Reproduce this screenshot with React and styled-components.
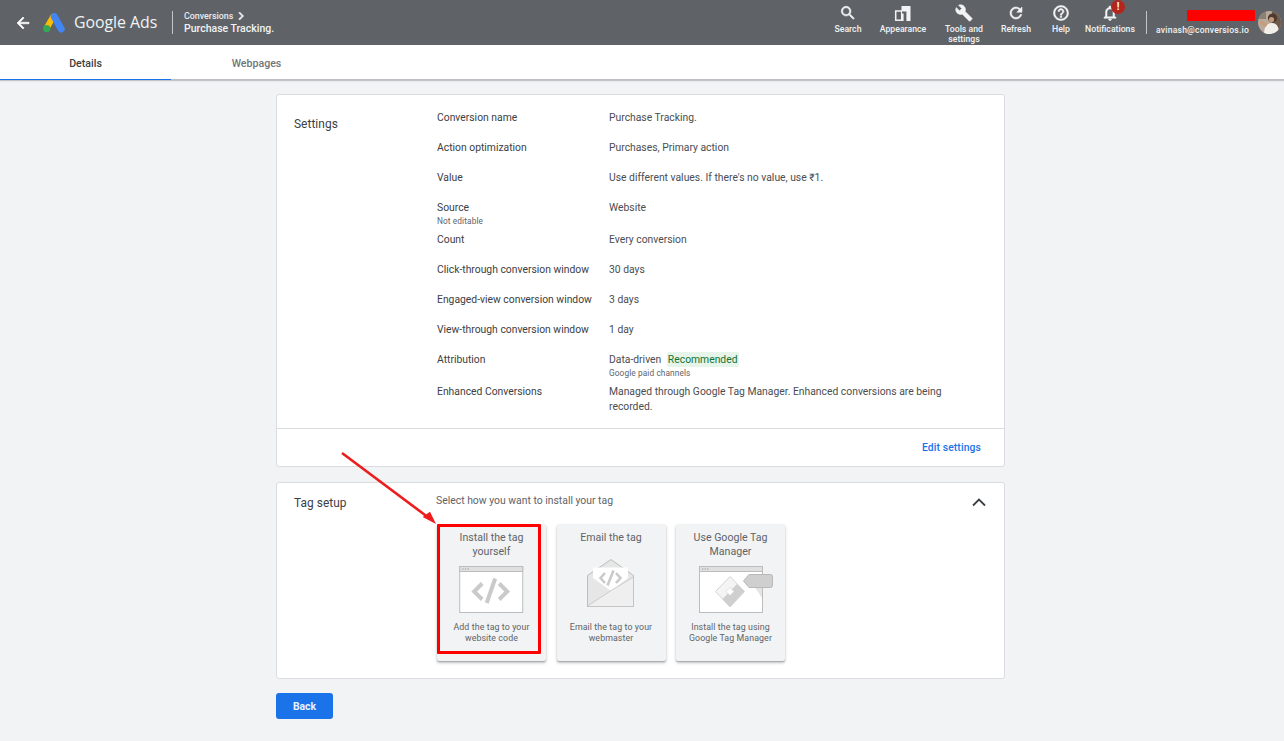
import React from "react";
import styled, { createGlobalStyle } from "styled-components";
import { MdArrowBack, MdBuild, MdChevronRight, MdHelpOutline, MdNotificationsNone, MdRefresh, MdSearch } from "react-icons/md";

const Global = createGlobalStyle`
  html, body { margin: 0; padding: 0; background: #f1f3f4; overflow: hidden; }
  body { font-family: Roboto, "Liberation Sans", sans-serif; color: #3c4043; }
  header svg path[fill="none"] { stroke: none; }
`;

const Page = styled.div`position: relative; width: 1284px; height: 741px; overflow: hidden;`;

const Header = styled.header`
  height: 45px; background: #5f6368; color: #fff; display: flex; align-items: stretch;
`;
const BackIcon = styled.div`
  width: 43px; display: flex; align-items: center; justify-content: center; font-size: 18px;
  svg { display: block; margin-left: 3px; stroke: currentColor; stroke-width: 0.8; }
`;
const Logo = styled.svg`width: 22px; height: 20px; margin-top: 13px;`;
const Brand = styled.div`
  margin-left: 9px; font-family: "Open Sans", Roboto, sans-serif; font-size: 15.9px; line-height: 45px; width: 98px; color: #f1f3f4; letter-spacing: -0.05px;
`;
const VDivider = styled.div`width: 1px; height: 23px; margin-top: 11px; background: #c4c7c9;`;
const Crumbs = styled.div`margin-left: 11px; padding-top: 10px; flex: 1;`;
const CrumbTop = styled.div`display: flex; align-items: center; height: 12px; font-size: 8.9px; font-weight: 500; line-height: 12px; color: #e8eaed;
  svg { flex: none; font-size: 16px; stroke: currentColor; stroke-width: 1; }`;
const CrumbMain = styled.div`font-size: 10.5px; font-weight: 500; line-height: 14px; color: #f1f3f4;`;
const Tools = styled.nav`display: flex; align-items: flex-start; margin-right: 10px;`;
const Tool = styled.div`
  position: relative; width: ${p => p.$w}px; display: flex; flex-direction: column; align-items: center; padding-top: 4px;
  font-size: 8.7px; font-weight: 500; line-height: 10px; text-align: center; color: #f1f3f4;
  svg.icon { display: block; width: 18px; height: 18px; margin-bottom: 2px; stroke: currentColor; stroke-width: 0.7; }
`;
const ToolLabel = styled.span`width: 44px;`;
const Badge = styled.span`
  position: absolute; top: 0; left: 27px; width: 14px; height: 14px; border-radius: 50%; background: #b3261e; color: #fff;
  font-size: 10px; font-weight: 700; line-height: 14px; text-align: center;
`;
const Account = styled.div`
  margin-left: 9px; width: 93px; display: flex; flex-direction: column; align-items: flex-end; padding-top: 10px;
`;
const Redact = styled.div`width: 68px; height: 11px; background: #ff0000; border-radius: 1px; margin-right: -6px;`;
const Email = styled.div`font-size: 8.6px; font-weight: 500; line-height: 12px; margin-top: 3px; color: #f1f3f4; letter-spacing: 0.2px; white-space: nowrap;`;
const Avatar = styled.svg`width: 23px; height: 23px; margin: 11px 3px 0 9px; border-radius: 50%;`;

const TabBar = styled.div`
  height: 34px; background: #fff; display: flex; border-bottom: 1px solid #bdc1c6; box-shadow: 0 1px 1px rgba(60,64,67,.25);
`;
const Tab = styled.div`
  width: 171px; height: 35px; text-align: center; font-size: 10.6px; font-weight: 500; line-height: 37px;
  color: ${p => (p.$active ? "#3c4043" : "#70757a")};
  box-sizing: border-box;
  border-bottom: ${p => (p.$active ? "1px solid #1a73e8" : "none")};
`;

const Main = styled.main`width: 729px; margin: 14px 0 0 276px; display: flex; flex-direction: column; align-items: flex-start;`;
const Card = styled.section`
  position: relative; width: 100%; box-sizing: border-box; background: #fff; border: 1px solid #dadce0; border-radius: 3px;
  margin-bottom: 15px;
`;
const Body = styled.div`display: flex; padding: ${p => p.$pad || 0};`;
const CardTitle = styled.h2`
  margin: 0; width: 143px; padding-left: 17px; font-size: 11.9px; font-weight: 400; line-height: 15px; color: #3c4043; letter-spacing: .05px;
  padding-top: ${p => p.$top}px; flex: none; box-sizing: content-box;
`;
const Rows = styled.div`display: flex; flex-direction: column;`;
const Row = styled.div`display: flex; margin-bottom: ${p => (p.$sub ? 5 : 15)}px; &:last-child { margin-bottom: 14px; }`;
const Label = styled.div`width: 172px; flex: none; font-size: 10.35px; line-height: 15px; color: #3c4043;`;
const Value = styled.div`width: 345px; font-size: 10.35px; line-height: 15px; color: #4a4d51;`;
const Sub = styled.div`font-size: 8.3px; line-height: 12px; color: #5f6368; letter-spacing: .1px;`;
const Chip = styled.span`
  display: inline-block; margin-left: 3px; padding: 0 1px; background: #e6f4ea; color: #137333; border-radius: 2px;
`;
const Footer = styled.div`
  border-top: 1px solid #dadce0; height: 37px; display: flex; align-items: center; justify-content: flex-end; padding-right: 23px;
  font-size: 10.4px; font-weight: 500; color: #1a73e8; letter-spacing: .1px;
`;
const TagBody = styled.div`flex: 1; padding-top: 11px; padding-bottom: 17px;`;
const Hint = styled.div`font-size: 10.4px; line-height: 14px; color: #5f6368; margin-left: -1px;`;
const Options = styled.div`display: flex; gap: 10.5px; margin: 16px 0 0 0;`;
const Option = styled.div`
  position: relative; width: 109px; height: 137px; box-sizing: border-box; background: #f1f3f4; border-radius: 2px;
  box-shadow: 0 1px 1px rgba(60,64,67,.25), 0 2px 3px rgba(60,64,67,.3);
  display: flex; flex-direction: column; align-items: center; padding-top: 7px;
`;
const OptionTitle = styled.div`height: 28px; width: 96px; font-size: 10.6px; line-height: 14px; text-align: center; color: #5f6368;`;
const Art = styled.svg`width: 90px; height: 54px; margin-top: 6px; flex: none; overflow: visible;`;
const OptionText = styled.div`margin-top: 3px; width: 104px; font-size: 8.8px; line-height: 11px; text-align: center; color: #5f6368; letter-spacing: .1px;`;
const Highlight = styled.div`position: absolute; left: 0; top: 0; width: 104px; height: 130px; box-sizing: border-box; border: 3px solid #ff0000; border-radius: 1px;`;
const Collapse = styled.svg`position: absolute; right: 18px; top: 14px; width: 14px; height: 10px;`;
const BackButton = styled.button`
  width: 57px; height: 26px; margin-top: -1px; border: 0; border-radius: 3px; background: #1a73e8; color: #e8f0fe; padding: 0;
  font-family: inherit; font-size: 10.4px; font-weight: 700;
`;
const Arrow = styled.svg`position: absolute; left: 335px; top: 445px; width: 110px; height: 90px; pointer-events: none;`;

const Appearance = () => (
  <svg className="icon" viewBox="0 0 18 18" fill="none" style={{ stroke: "none" }}>
    <rect x="1.7" y="7" width="6" height="9.2" stroke="#f1f3f4" strokeWidth="1.5" />
    <rect x="7.5" y="2" width="9" height="15" fill="#f1f3f4" />
    <rect x="9.6" y="7.5" width="2.8" height="9.5" fill="#5f6368" />
    <rect x="8" y="7.5" width="2" height="2" fill="#5f6368" />
  </svg>
);

const Win = ({ children }) => (
  <>
    <rect x="13.5" y="1.5" width="63" height="46" fill="#fff" stroke="#bdbdbd" />
    <rect x="13.5" y="1.5" width="63" height="5" fill="#e0e0e0" stroke="#bdbdbd" />
    <path d="M16 4h1.4M18.6 4H20M21.2 4h1.4" stroke="#9e9e9e" />
    {children}
  </>
);
const CodeGlyph = () => (
  <g fill="none" stroke="#cacaca" strokeWidth="4">
    <path d="M36 18.5 L28 26.5 L36 34.5" />
    <path d="M53 18.5 L61 26.5 L53 34.5" />
    <path d="M49 13.5 L40.5 38" />
  </g>
);

const rows = [
  ["Conversion name", "Purchase Tracking."],
  ["Action optimization", "Purchases, Primary action"],
  ["Value", "Use different values. If there's no value, use ₹1."],
  ["Source", "Website", "Not editable"],
  ["Count", "Every conversion"],
  ["Click-through conversion window", "30 days"],
  ["Engaged-view conversion window", "3 days"],
  ["View-through conversion window", "1 day"],
];

export default function App() {
  return (
    <Page>
      <Global />
      <Header>
        <BackIcon><MdArrowBack /></BackIcon>
        <Logo viewBox="0 0 22 20">
          <path d="M10 4 L4 14.5" stroke="#fbbc04" strokeWidth="6" strokeLinecap="round" />
          <path d="M11.3 3.6 L18.2 16" stroke="#4285f4" strokeWidth="7" strokeLinecap="round" />
          <circle cx="3.7" cy="15.6" r="3.6" fill="#34a853" />
        </Logo>
        <Brand>Google Ads</Brand>
        <VDivider />
        <Crumbs>
          <CrumbTop>Conversions<MdChevronRight /></CrumbTop>
          <CrumbMain>Purchase Tracking.</CrumbMain>
        </Crumbs>
        <Tools>
          <Tool $w={48}><MdSearch className="icon" />Search</Tool>
          <Tool $w={62}><Appearance />Appearance</Tool>
          <Tool $w={60}><MdBuild className="icon" /><ToolLabel>Tools and settings</ToolLabel></Tool>
          <Tool $w={44}><MdRefresh className="icon" />Refresh</Tool>
          <Tool $w={46}><MdHelpOutline className="icon" />Help</Tool>
          <Tool $w={52}><MdNotificationsNone className="icon" /><Badge>!</Badge>Notifications</Tool>
        </Tools>
        <VDivider />
        <Account>
          <Redact />
          <Email>avinash@conversios.io</Email>
        </Account>
        <Avatar viewBox="0 0 23 23">
          <rect width="23" height="23" fill="#b9a999" />
          <rect x="14" width="9" height="23" fill="#6d5a4c" />
          <circle cx="14.5" cy="7" r="4.6" fill="#4d3a2e" />
          <circle cx="13.5" cy="8.5" r="2.6" fill="#c39a7c" />
          <path d="M6 23c0-7 3-11 8-11s7 4 7 11z" fill="#f2eee9" />
          <path d="M0 0h8v8H0z" fill="#8a8076" />
          <path d="M3 9l6 4-1 3-6-3z" fill="#c99a76" />
        </Avatar>
      </Header>
      <TabBar>
        <Tab $active>Details</Tab>
        <Tab>Webpages</Tab>
      </TabBar>
      <Main>
        <Card>
          <Body $pad="15px 0 0 0">
            <CardTitle $top={7}>Settings</CardTitle>
            <Rows>
              {rows.map(([l, v, s]) => (
                <Row key={l} $sub={!!s}>
                  <Label>{l}{s && <Sub>{s}</Sub>}</Label>
                  <Value>{v}</Value>
                </Row>
              ))}
              <Row $sub>
                <Label>Attribution</Label>
                <Value>Data-driven <Chip>Recommended</Chip><Sub>Google paid channels</Sub></Value>
              </Row>
              <Row>
                <Label>Enhanced Conversions</Label>
                <Value>Managed through Google Tag Manager. Enhanced conversions are being recorded.</Value>
              </Row>
            </Rows>
          </Body>
          <Footer>Edit settings</Footer>
        </Card>
        <Card>
          <Body>
            <CardTitle $top={13}>Tag setup</CardTitle>
            <TagBody>
              <Hint>Select how you want to install your tag</Hint>
              <Options>
                <Option>
                  <OptionTitle>Install the tag yourself</OptionTitle>
                  <Art viewBox="0.8 0 90 54"><Win><CodeGlyph /></Win></Art>
                  <OptionText>Add the tag to your website code</OptionText>
                  <Highlight />
                </Option>
                <Option>
                  <OptionTitle>Email the tag</OptionTitle>
                  <Art viewBox="0 0 90 54">
                    <path d="M21.5 10.5 L45 -5.5 L67.5 10.5 V41.5 H21.5 Z" fill="#e6e6e6" stroke="#bdbdbd" />
                    <path d="M27 2.5 H62 V13 L45 26 L27 13 Z" fill="#fff" />
                    <g fill="none" stroke="#cacaca" strokeWidth="2.6">
                      <path d="M39 8 L34.5 13 L39 18" />
                      <path d="M50 8 L54.5 13 L50 18" />
                      <path d="M47.5 5.5 L41.5 20.5" />
                    </g>
                    <path d="M21.5 41 L46 25 L67.5 12 V41.5 H21.5 Z" fill="#efefef" stroke="#bdbdbd" strokeWidth=".7" />
                  </Art>
                  <OptionText>Email the tag to your webmaster</OptionText>
                </Option>
                <Option>
                  <OptionTitle>Use Google Tag Manager</OptionTitle>
                  <Art viewBox="0 0 90 54">
                    <Win>
                      <path d="M69 22.5 H76 V33 Z" fill="#e4e4e4" />
                      <path d="M44 11.5 L58.5 26.5 L44 42 L29.5 26.5 Z" fill="#f4f4f4" stroke="#d4d4d4" />
                      <path d="M51 19 L58.5 26.5 L44 42 L36.5 34 Z" fill="#cfcfcf" />
                      <path d="M44 22.5 L48 26.5 L44 30.5 L40 26.5 Z" fill="#fff" stroke="#d0d0d0" strokeWidth=".6" />
                    </Win>
                    <path d="M57.5 16 L63 9.5 H84.5 Q86.5 9.5 86.5 11.5 V20.5 Q86.5 22.5 84.5 22.5 H63 Z" fill="#cfcfcf" stroke="#b8b8b8" />
                  </Art>
                  <OptionText>Install the tag using Google Tag Manager</OptionText>
                </Option>
              </Options>
            </TagBody>
            <Collapse viewBox="0 0 14 10"><path d="M1 8.5 L7 2.5 L13 8.5" fill="none" stroke="#3c4043" strokeWidth="1.8" /></Collapse>
          </Body>
        </Card>
        <BackButton>Back</BackButton>
      </Main>
      <Arrow viewBox="0 0 110 90">
        <path d="M7 8 L92 71.5" stroke="#ee1c1c" strokeWidth="2.6" />
        <path d="M101 79 L87.7 72 L95 66.7 Z" fill="#ee1c1c" />
      </Arrow>
    </Page>
  );
}
